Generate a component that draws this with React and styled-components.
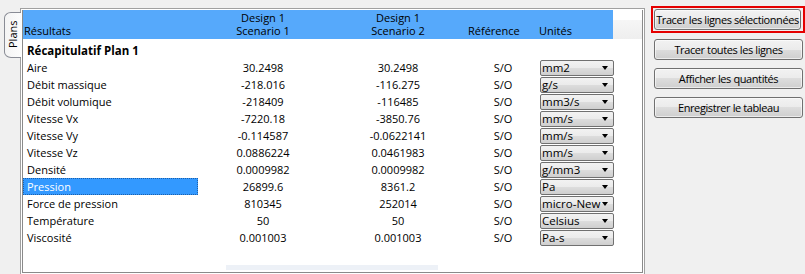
import React from "react";
import styled, { createGlobalStyle, css } from "styled-components";

const GlobalStyle = createGlobalStyle`
  html, body { margin: 0; padding: 0; background: #f0f0f0; overflow: hidden; }
  body { font-family: "Open Sans", "Noto Sans", sans-serif; font-size: 11px; color: #000; }
`;

const Screen = styled.div`
  display: flex;
  width: 805px;
  height: 274px;
  overflow: hidden;
`;

const TabStrip = styled.div`
  width: 20px;
  flex: none;
  padding-top: 12px;
  position: relative;
  z-index: 1;
`;

const Tab = styled.div`
  margin-left: 4px;
  width: 17px;
  height: 46px;
  box-sizing: border-box;
  border: 1px solid #898c95;
  border-right: none;
  border-radius: 7px 0 0 7px / 6px 0 0 6px;
  background: linear-gradient(to right, #f4f4f4, #fcfcfc);
  display: flex;
  justify-content: center;
  padding-top: 9px;
`;

const TabLabel = styled.span`
  writing-mode: vertical-rl;
  transform: rotate(180deg);
  line-height: 12px;
  font-size: 11px;
  height: 26px;
  text-align: right;
`;

const Panel = styled.div`
  flex: none;
  width: 625px;
  margin-top: 8px;
  box-sizing: border-box;
  border: 1px solid #a0a0a0;
  border-bottom: none;
  padding: 1px 2px 0 2px;
  background: #fff;
  box-shadow: inset 0 0 0 1px #fff, inset 0 0 0 2px #8a8a8a;
  display: flex;
  flex-direction: column;
`;

const HeaderBar = styled.div`
  display: flex;
  height: 29px;
`;

const cols = "175px 130px 140px 70px 78px";

const HeaderBlue = styled.div`
  width: 590px;
  flex: none;
  background: #56a9fb;
  display: grid;
  grid-template-columns: 175px 130px 140px 70px 75px;
  align-items: end;
  padding-bottom: 2px;
  box-sizing: border-box;
`;

const HeaderFill = styled.div`
  flex: 1;
  background: linear-gradient(to bottom, #fff 0, #fff 10px, #f6f6f6 10px, #eeeeee 100%);
`;

const HeadCell = styled.div`
  line-height: 13px;
  white-space: pre-line;
  text-align: ${(p) => p.$align || "left"};
  padding-left: ${(p) => p.$pad || 0}px;
`;

const Body = styled.div`
  margin-top: 3px;
  display: flex;
  flex-direction: column;
`;

const Row = styled.div`
  display: grid;
  grid-template-columns: ${cols};
  height: 17px;
  line-height: 17px;
`;

const Label = styled.div`
  padding-left: 4px;
  white-space: nowrap;
  ${(p) =>
    p.$bold &&
    css`
      font-weight: 700;
      font-size: 11.5px;
    `}
  ${(p) =>
    p.$selected &&
    css`
      background: #3399ff;
      color: #fff;
      outline: 1px dotted #1d5fa8;
      outline-offset: -1px;
    `}
`;

const Value = styled.div`
  text-align: center;
  white-space: nowrap;
`;

const Combo = styled.div`
  margin: 1px 0 0 2px;
  width: 74px;
  height: 16px;
  box-sizing: border-box;
  border: 1px solid #707070;
  border-radius: 2px;
  background: linear-gradient(to bottom, #f2f2f2 0%, #ebebeb 50%, #dddddd 50%, #cfcfcf 100%);
  display: flex;
  align-items: center;
  line-height: 14px;
`;

const ComboText = styled.span`
  flex: 1;
  padding-left: 1px;
  white-space: nowrap;
  font-size: 11.5px;
`;

const ComboArrow = styled.span`
  flex: none;
  width: 0;
  height: 0;
  margin: 0 5px 0 2px;
  border-left: 3.5px solid transparent;
  border-right: 3.5px solid transparent;
  border-top: 4px solid #000;
`;

const ScrollHint = styled.div`
  margin: 19px 0 0 203px;
  width: 212px;
  height: 5px;
  background: #edf1f7;
`;

const ButtonColumn = styled.div`
  flex: none;
  width: 154px;
  margin-left: 6px;
  padding-top: 6px;
  display: flex;
  flex-direction: column;
  gap: 8px;
`;

const FocusFrame = styled.div`
  border: 2px solid #e50000;
  padding: 1px 2px 1px 1px;
  margin-bottom: -2px;
`;

const Button = styled.div`
  height: 21px;
  box-sizing: border-box;
  margin-left: ${(p) => (p.$framed ? 0 : 3)}px;
  width: ${(p) => (p.$framed ? "auto" : "149px")};
  border: 1px solid #707070;
  border-radius: 3px;
  background: linear-gradient(to bottom, #f2f2f2 0%, #ebebeb 50%, #dddddd 50%, #cfcfcf 100%);
  box-shadow: inset 0 0 0 1px rgba(255, 255, 255, 0.6);
  display: flex;
  align-items: center;
  justify-content: center;
  white-space: nowrap;
  letter-spacing: -0.4px;
  font-size: 11px;
`;

const rows = [
  ["Aire", "30.2498", "30.2498", "mm2"],
  ["Débit massique", "-218.016", "-116.275", "g/s"],
  ["Débit volumique", "-218409", "-116485", "mm3/s"],
  ["Vitesse Vx", "-7220.18", "-3850.76", "mm/s"],
  ["Vitesse Vy", "-0.114587", "-0.0622141", "mm/s"],
  ["Vitesse Vz", "0.0886224", "0.0461983", "mm/s"],
  ["Densité", "0.0009982", "0.0009982", "g/mm3"],
  ["Pression", "26899.6", "8361.2", "Pa"],
  ["Force de pression", "810345", "252014", "micro-New"],
  ["Température", "50", "50", "Celsius"],
  ["Viscosité", "0.001003", "0.001003", "Pa-s"],
];

export default function App() {
  return (
    <>
      <GlobalStyle />
      <Screen>
        <TabStrip>
          <Tab>
            <TabLabel>Plans</TabLabel>
          </Tab>
        </TabStrip>
        <Panel>
          <HeaderBar>
            <HeaderBlue>
              <HeadCell $pad={1}>Résultats</HeadCell>
              <HeadCell $align="center">{"Design 1\nScenario 1"}</HeadCell>
              <HeadCell $align="center">{"Design 1\nScenario 2"}</HeadCell>
              <HeadCell>Référence</HeadCell>
              <HeadCell $pad={1}>Unités</HeadCell>
            </HeaderBlue>
            <HeaderFill />
          </HeaderBar>
          <Body>
            <Row>
              <Label $bold>Récapitulatif Plan 1</Label>
            </Row>
            {rows.map(([name, a, b, unit]) => (
              <Row key={name}>
                <Label $selected={name === "Pression"}>{name}</Label>
                <Value>{a}</Value>
                <Value>{b}</Value>
                <Value>S/O</Value>
                <Combo>
                  <ComboText>{unit}</ComboText>
                  <ComboArrow />
                </Combo>
              </Row>
            ))}
          </Body>
          <ScrollHint />
        </Panel>
        <ButtonColumn>
          <FocusFrame>
            <Button $framed>Tracer les lignes sélectionnées</Button>
          </FocusFrame>
          <Button>Tracer toutes les lignes</Button>
          <Button>Afficher les quantités</Button>
          <Button>Enregistrer le tableau</Button>
        </ButtonColumn>
      </Screen>
    </>
  );
}
